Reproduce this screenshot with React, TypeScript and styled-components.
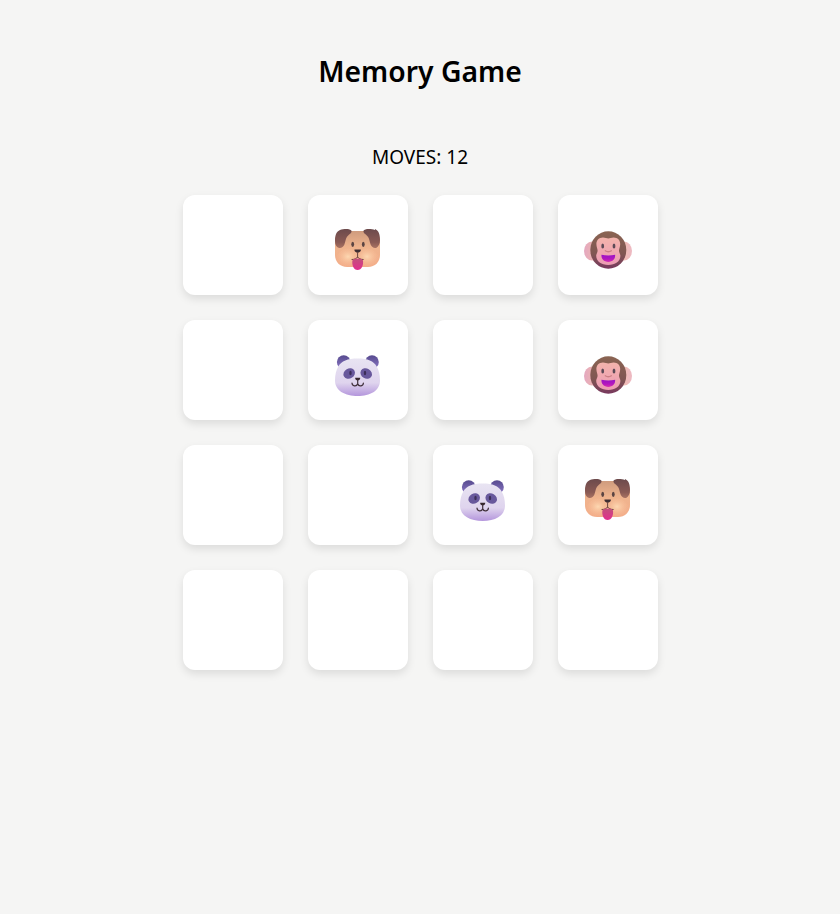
import React from "react";
import styled, { createGlobalStyle } from "styled-components";

const Global = createGlobalStyle`
  html, body { margin: 0; padding: 0; background: #f5f5f4; }
  body { font-family: "Noto Sans", "Open Sans", "Liberation Sans", sans-serif; color: #000; }
`;

const Page = styled.main`
  min-height: 914px;
  display: flex;
  flex-direction: column;
  align-items: center;
  box-sizing: border-box;
  padding-top: 50px;
`;

const Title = styled.h1`
  margin: 0;
  font-size: 28.3px;
  line-height: 42px;
  font-weight: 600;
`;

const Moves = styled.p`
  margin: 51px 0 0;
  font-size: 19px;
  line-height: 28px;
  font-weight: 400;
`;

const Board = styled.div`
  margin-top: 24px;
  display: grid;
  grid-template-columns: repeat(4, 100px);
  grid-auto-rows: 100px;
  gap: 25px;
`;

const Card = styled.div`
  display: flex;
  align-items: center;
  justify-content: center;
  background: #fff;
  border-radius: 12px;
  box-shadow: 0 4px 8px rgba(0, 0, 0, 0.1);
`;

const Art = styled.svg`
  display: block;
  width: 48px;
  height: 52px;
  overflow: visible;
  filter: blur(0.45px);
`;

const Dog = () => (
  <Art viewBox="0 0 48 52" aria-label="dog">
    <defs>
      <linearGradient id="dogHead" x1="0" y1="0" x2="0" y2="1">
        <stop offset="0" stopColor="#cf9c7e" />
        <stop offset="0.45" stopColor="#efb48e" />
        <stop offset="1" stopColor="#f4ae8a" />
      </linearGradient>
      <linearGradient id="dogEar" x1="0" y1="0" x2="0" y2="1">
        <stop offset="0" stopColor="#6c4a4c" />
        <stop offset="0.7" stopColor="#8a5a54" />
        <stop offset="1" stopColor="#a87262" />
      </linearGradient>
      <radialGradient id="dogMuzzle" cx="0.5" cy="0.45" r="0.55">
        <stop offset="0" stopColor="#fdd8b2" />
        <stop offset="1" stopColor="#f8bc96" stopOpacity="0" />
      </radialGradient>
      <linearGradient id="dogTongue" x1="0" y1="0" x2="0" y2="1">
        <stop offset="0" stopColor="#c2507c" />
        <stop offset="1" stopColor="#e22e8e" />
      </linearGradient>
    </defs>
    <path d="M11 12h25c5.500 0 10 4.500 10 10v14c0 7-5 12-12 12H13C6 48 1 43 1 36V22c0-5.500 4.500-10 10-10Z" fill="url(#dogHead)" />
    <path d="M6 11c4-1.500 10.500-1.500 11.500.8 .7 2-2.500 3.700-4.500 6-1.500 2-1.500 5-2.700 8-1 2.500-3.300 3.700-5.800 3C2.500 28 1 26 1 22 1 16 2.500 12.500 6 11Z" fill="url(#dogEar)" />
    <path d="M41 11c-4-1.500-10.500-1.500-11.500.8-.7 2 2.500 3.700 4.500 6 1.500 2 1.500 5 2.700 8 1 2.500 3.300 3.700 5.800 3 2-1.800 3.500-3.800 3.500-7.800 0-6-1.500-9.500-5-11Z" fill="url(#dogEar)" />
    <ellipse cx="14" cy="38.500" rx="11" ry="9" fill="url(#dogMuzzle)" />
    <ellipse cx="33" cy="38.500" rx="11" ry="9" fill="url(#dogMuzzle)" />
    <ellipse cx="18.700" cy="25.300" rx="1.400" ry="2.600" fill="#5a4442" />
    <ellipse cx="29.300" cy="25.300" rx="1.400" ry="2.600" fill="#5a4442" />
    <path d="M20.500 30.500h6.300c.5 1.500-1.500 3.200-3.150 3.200s-3.650-1.700-3.150-3.200Z" fill="#3e2e32" />
    <path d="M23.600 33.500v4.500M18 40.500c2.400 0 4.400-.8 5.600-2.500 1.200 1.700 3.200 2.500 5.600 2.500" fill="none" stroke="#6a4642" strokeWidth="1" strokeLinecap="round" />
    <path d="M18.400 41.500c1.800-1.800 3.600-2.300 5.200-1.600 1.700-.7 3.600-.2 5.400 1.600 .6 4.500-1.300 9.500-5.400 9.500-4 0-5.800-5-5.200-9.500Z" fill="url(#dogTongue)" />
  </Art>
);

const Monkey = () => (
  <Art viewBox="0 0 48 52" aria-label="monkey">
    <defs>
      <linearGradient id="monkeyHead" x1="0" y1="0" x2="0" y2="1">
        <stop offset="0" stopColor="#8a6452" />
        <stop offset="0.6" stopColor="#805652" />
        <stop offset="1" stopColor="#78385e" />
      </linearGradient>
      <linearGradient id="monkeyEarL" x1="0" y1="0" x2="1" y2="0">
        <stop offset="0" stopColor="#e4a8c0" />
        <stop offset="1" stopColor="#f2bca8" />
      </linearGradient>
      <linearGradient id="monkeyEarR" x1="1" y1="0" x2="0" y2="0">
        <stop offset="0" stopColor="#ecb8c2" />
        <stop offset="1" stopColor="#f6c2a8" />
      </linearGradient>
      <linearGradient id="monkeyFace" x1="0" y1="0" x2="0" y2="1">
        <stop offset="0" stopColor="#f4b4ac" />
        <stop offset="1" stopColor="#ec9cb4" />
      </linearGradient>
      <linearGradient id="monkeyMouth" x1="0" y1="0" x2="0" y2="1">
        <stop offset="0" stopColor="#9a14c4" />
        <stop offset="0.6" stopColor="#b418be" />
        <stop offset="1" stopColor="#d830ae" />
      </linearGradient>
    </defs>
    <ellipse cx="8" cy="32" rx="8" ry="9.500" fill="url(#monkeyEarL)" />
    <ellipse cx="40" cy="32" rx="8" ry="9.500" fill="url(#monkeyEarR)" />
    <ellipse cx="24.300" cy="31" rx="18" ry="18.800" fill="url(#monkeyHead)" />
    <path d="M19 18.500c2 0 3.900 1 5.300 1s3.300-1 5.300-1c4 0 6.600 2.800 6.600 6.500 0 3-1.200 4.800-1.200 6.800 0 2 1.400 3 1.400 5 0 5.700-5.300 9.200-12.100 9.200s-12.100-3.500-12.100-9.200c0-2 1.400-3 1.400-5 0-2-1.200-3.800-1.200-6.800 0-3.700 2.600-6.500 6.600-6.500Z" fill="url(#monkeyFace)" />
    <ellipse cx="18.700" cy="27" rx="1.400" ry="2.600" fill="#5c4a56" />
    <ellipse cx="30" cy="27" rx="1.400" ry="2.600" fill="#5c4a56" />
    <path d="M21.300 31.800c1 .7 1.900 1 3 1s2-.3 3-1" fill="none" stroke="#cc8086" strokeWidth="1.400" strokeLinecap="round" />
    <path d="M17.500 35.800c4.200 .8 9.400 .8 13.600 0 .6 3.700-2.400 7.200-6.800 7.200s-7.400-3.500-6.800-7.200Z" fill="url(#monkeyMouth)" />
  </Art>
);

const Panda = () => (
  <Art viewBox="0 0 48 52" aria-label="panda">
    <defs>
      <linearGradient id="pandaHead" x1="0" y1="0" x2="0" y2="1">
        <stop offset="0" stopColor="#e8e4f2" />
        <stop offset="0.65" stopColor="#dfd4ee" />
        <stop offset="1" stopColor="#b496dc" />
      </linearGradient>
      <linearGradient id="pandaEar" x1="0" y1="0" x2="0" y2="1">
        <stop offset="0" stopColor="#564a8e" />
        <stop offset="1" stopColor="#8a76c4" />
      </linearGradient>
    </defs>
    <circle cx="9.700" cy="18" r="6.800" fill="url(#pandaEar)" />
    <circle cx="38" cy="18" r="6.800" fill="url(#pandaEar)" />
    <path d="M23.700 14.500c10 0 16 2.500 19 8 2 3.500 3.300 8 3.300 14C46 47 36 52 23.700 52 11.500 52 1 47 1 36.500c0-6 1.300-10.500 3.300-14 3-5.500 9.300-8 19.400-8Z" fill="url(#pandaHead)" />
    <ellipse cx="15.200" cy="29.500" rx="6" ry="5" fill="#68589c" transform="rotate(-30 15.200 29.500)" />
    <ellipse cx="32.200" cy="29.500" rx="6" ry="5" fill="#68589c" transform="rotate(30 32.200 29.500)" />
    <ellipse cx="16.500" cy="29" rx="1.200" ry="2.200" fill="#3c2e58" />
    <ellipse cx="31" cy="29" rx="1.200" ry="2.200" fill="#3c2e58" />
    <path d="M21.200 33.700h5c.3 1.200-1.100 2.900-2.500 2.900s-2.800-1.700-2.500-2.900Z" fill="#38282e" />
    <path d="M18 39c0 3.200 4.500 4.200 5.700.8 1.200 3.400 5.700 2.400 5.700-.8M23.700 36v3.800" fill="none" stroke="#40303a" strokeWidth="1.200" strokeLinecap="round" />
  </Art>
);

const faces: Record<string, React.FC> = { dog: Dog, monkey: Monkey, panda: Panda };

const cards: (string | null)[] = [
  null, "dog", null, "monkey",
  null, "panda", null, "monkey",
  null, null, "panda", "dog",
  null, null, null, null,
];

export default function App() {
  return (
    <>
      <Global />
      <Page>
        <Title>Memory Game</Title>
        <Moves>MOVES: 12</Moves>
        <Board>
          {cards.map((name, i) => {
            const Face = name ? faces[name] : null;
            return <Card key={i}>{Face && <Face />}</Card>;
          })}
        </Board>
      </Page>
    </>
  );
}
